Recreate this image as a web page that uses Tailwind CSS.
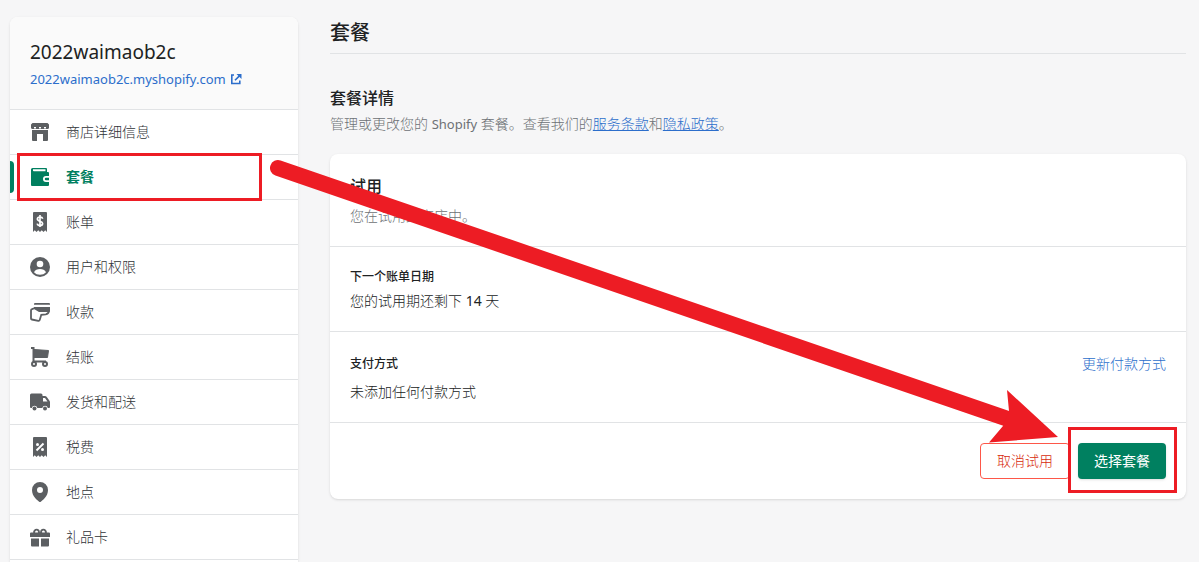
<!doctype html>
<html lang="zh-CN">
  <head>
    <meta charset="UTF-8" />
    <meta name="viewport" content="width=device-width, initial-scale=1.0" />
    <title>套餐</title>
    <script src="https://cdn.jsdelivr.net/npm/@tailwindcss/browser@4"></script>
  </head>

  <body
    class="relative bg-[#f6f6f7] font-['Noto_Sans','Noto_Sans_CJK_SC',sans-serif] text-sm leading-5 text-[#202223]"
  >
    <div class="flex h-screen gap-8 overflow-hidden pl-[10px] pr-[13px]">
      <!-- Settings navigation -->
      <aside
        class="mt-[17px] w-72 shrink-0 overflow-hidden rounded-t-lg bg-white shadow"
      >
        <div class="h-[92px] bg-[#fafafa] px-5 pt-[21px]">
          <p class="text-[19px] leading-7">2022waimaob2c</p>
          <a
            href="#"
            class="flex items-center gap-1 text-[13px] leading-[26px] text-[#2c6ecb]"
          >
            2022waimaob2c.myshopify.com
            <svg class="size-3" viewBox="0 0 12 12" fill="none" stroke="currentColor" stroke-width="1.6">
              <path d="M4 2H1.800v8.500h8V7.500M5 7.300l5.200-5.200" />
              <path d="M6.500 1h5v5z" fill="currentColor" stroke="none" />
            </svg>
          </a>
        </div>

        <nav class="font-light text-[#303337]">
          <a href="#" class="flex h-[45px] items-center gap-4 border-t border-[#e1e3e5] px-5">
            <svg class="size-5 text-[#5c5f62]" viewBox="0 0 20 20" fill="currentColor">
              <path d="M2.500 1h15L19 2.500V6a1.500 1.500 0 0 1-1.500 1h-15A1.500 1.500 0 0 1 1 6V2.500z" />
              <path d="M4 5h2v1.500H4zM9 5h2v1.500H9zM14 5h2v1.500h-2z" fill="#fff" />
              <path d="M2 8h16v10a1 1 0 0 1-1 1h-4v-7H7v7H3a1 1 0 0 1-1-1z" />
            </svg>
            商店详细信息
          </a>
          <a
            href="#"
            aria-current="page"
            class="relative flex h-[45px] items-center gap-4 border-t border-[#e1e3e5] px-5 font-bold text-[#007f5f]"
          >
            <span class="absolute inset-y-[6px] left-0 w-1 rounded-r bg-[#008060]"></span>
            <span class="absolute -top-[2px] -bottom-[2px] left-[7px] right-9 border-3 border-[#ed1c24]"></span>
            <svg class="size-5" viewBox="0 0 20 20" fill="currentColor">
              <path
                fill-rule="evenodd"
                d="M2.500 1H16a1 1 0 0 1 1 1v3h1a1 1 0 0 1 1 1v3h-3a3 3 0 0 0 0 6h3v3a1 1 0 0 1-1 1H2a1 1 0 0 1-1-1V2.500A1.500 1.500 0 0 1 2.500 1zM3 2.200v1.300q0 .8.800.8H15.500V2.200z"
              />
              <path d="M16 10.800h3v2.400h-3a1.200 1.200 0 0 1 0-2.400z" />
            </svg>
            套餐
          </a>
          <a href="#" class="flex h-[45px] items-center gap-4 border-t border-[#e1e3e5] px-5">
            <svg class="size-5 text-[#5c5f62]" viewBox="0 0 20 20" fill="currentColor">
              <path d="M4 0h12a1 1 0 0 1 1 1v19l-1.750-1.800L13.500 20l-1.750-1.800L10 20l-1.750-1.800L6.500 20l-1.750-1.800L3 20V1a1 1 0 0 1 1-1z" />
              <path d="M12.700 6.800C12.400 5.500 11.300 5 10 5c-1.500 0-2.600.8-2.600 2.100 0 3 5.200 1.600 5.200 4.400 0 1.300-1.100 2-2.600 2s-2.500-.6-2.800-1.900M10 3v12" fill="none" stroke="#fff" stroke-width="1.700" />
            </svg>
            账单
          </a>
          <a href="#" class="flex h-[45px] items-center gap-4 border-t border-[#e1e3e5] px-5">
            <svg class="size-5 text-[#5c5f62]" viewBox="0 0 20 20">
              <circle cx="10" cy="10" r="10" fill="currentColor" />
              <circle cx="10" cy="7" r="3.300" fill="#fff" />
              <path d="M4 15.300C5 13 7.300 12 10 12s5 1 6 3.300c-1.500 1.700-3.600 2.500-6 2.500s-4.500-.8-6-2.500z" fill="#fff" />
            </svg>
            用户和权限
          </a>
          <a href="#" class="flex h-[45px] items-center gap-4 border-t border-[#e1e3e5] px-5">
            <svg class="size-5 text-[#5c5f62]" viewBox="0 0 20 20" fill="currentColor">
              <path d="M5 1h14a1 1 0 0 1 1 1v.700H4V2a1 1 0 0 1 1-1zM4 5h16v4a1 1 0 0 1-1 1H9L4 7z" />
              <path d="M5 6 2 7.200A1.500 1.500 0 0 0 1 8.600V16.500a1 1 0 0 0 .8 1l6.500 1.300a1.200 1.200 0 0 0 1.400-.8l1.600-5.200 4.500-.5q2.700-.5 3.200-3.300" fill="none" stroke="currentColor" stroke-width="1.800" />
            </svg>
            收款
          </a>
          <a href="#" class="flex h-[45px] items-center gap-4 border-t border-[#e1e3e5] px-5">
            <svg class="size-5 text-[#5c5f62]" viewBox="0 0 20 20" fill="none" stroke="currentColor" stroke-width="2">
              <path d="M1 1h2.500v13.500h12.500" />
              <path d="M4 2.500 18.500 3.500l-1 7H4z" fill="currentColor" stroke-width="1" stroke-linejoin="round" />
              <circle cx="4" cy="17" r="2" fill="#fff" />
              <circle cx="15" cy="17" r="2" fill="#fff" />
            </svg>
            结账
          </a>
          <a href="#" class="flex h-[45px] items-center gap-4 border-t border-[#e1e3e5] px-5">
            <svg class="size-5 text-[#5c5f62]" viewBox="0 0 20 20" fill="currentColor">
              <path
                fill-rule="evenodd"
                d="M1.500 1.500h9.500A1.500 1.500 0 0 1 12.500 3v1H15a2 2 0 0 1 1.600.8l2.900 4q.5.700.5 1.500V15a1 1 0 0 1-1 1h-1.200a2.800 2.800 0 0 0-5.500 0H7.300a2.800 2.800 0 0 0-5.500 0H1a1 1 0 0 1-1-1V3a1.500 1.500 0 0 1 1.500-1.500zM13 6v3.500h4.500L15 6z"
              />
              <circle cx="4.500" cy="16.500" r="2" />
              <circle cx="15" cy="16.500" r="2" />
            </svg>
            发货和配送
          </a>
          <a href="#" class="flex h-[45px] items-center gap-4 border-t border-[#e1e3e5] px-5">
            <svg class="size-5 text-[#5c5f62]" viewBox="0 0 20 20" fill="currentColor">
              <path d="M4 0h12a1 1 0 0 1 1 1v19l-1.750-1.800L13.500 20l-1.750-1.800L10 20l-1.750-1.800L6.500 20l-1.750-1.800L3 20V1a1 1 0 0 1 1-1z" />
              <path d="m6.500 13.500 7-7" stroke="#fff" stroke-width="1.900" />
              <circle cx="7.500" cy="7.500" r="1.500" fill="#fff" />
              <circle cx="12.500" cy="12.500" r="1.500" fill="#fff" />
            </svg>
            税费
          </a>
          <a href="#" class="flex h-[45px] items-center gap-4 border-t border-[#e1e3e5] px-5">
            <svg class="size-5 text-[#5c5f62]" viewBox="0 0 20 20" fill="currentColor">
              <path
                fill-rule="evenodd"
                d="M10 0a8 8 0 0 0-8 8c0 6.500 5.500 10.500 7.500 11.900a1 1 0 0 0 1 0C12.500 18.500 18 14.500 18 8a8 8 0 0 0-8-8zm0 5a3 3 0 1 1 0 6 3 3 0 0 1 0-6z"
              />
            </svg>
            地点
          </a>
          <a href="#" class="flex h-[46px] items-center gap-4 border-y border-[#e1e3e5] px-5">
            <svg class="size-5 text-[#5c5f62]" viewBox="0 0 20 20" fill="currentColor">
              <path d="M1 5.500h18a1 1 0 0 1 1 1V10H0V6.500a1 1 0 0 1 1-1zM1 11.500h8v8H2a1 1 0 0 1-1-1zM11 11.500h8v7a1 1 0 0 1-1 1h-7z" />
              <path d="M4.500 6.500a2.500 2.500 0 1 1 4.500-2q.3 1-.500 2M15.500 6.500a2.500 2.500 0 1 0-4.500-2q-.3 1 .500 2" fill="none" stroke="currentColor" stroke-width="1.900" />
            </svg>
            礼品卡
          </a>
        </nav>
      </aside>

      <!-- Plan page -->
      <main class="min-w-0 grow">
        <h1 class="border-b border-[#e1e3e5] pt-[19px] pb-[6px] text-xl font-medium leading-7">
          套餐
        </h1>

        <h2 class="mt-8 text-base font-medium leading-6">套餐详情</h2>
        <p class="mt-1 font-light text-[#6d7175]">
          管理或更改您的 <span class="text-[13px] font-normal">Shopify</span> 套餐。查看我们的<a
            href="#"
            class="text-[#2c6ecb] underline"
            >服务条款</a
          >和<a href="#" class="text-[#2c6ecb] underline">隐私政策</a>。
        </p>

        <div class="mt-5 divide-y divide-[#e1e3e5] rounded-lg bg-white shadow">
          <section class="p-5">
            <h2 class="text-base font-medium leading-6">试用</h2>
            <p class="mt-2 font-light text-[#6d7175]">您在试用此商店中。</p>
          </section>
          <section class="p-5">
            <h3 class="text-xs font-medium leading-5">下一个账单日期</h3>
            <p class="mt-1 font-light">您的试用期还剩下 <span class="font-normal">14</span> 天</p>
          </section>
          <section class="flex items-start justify-between px-5 pt-[22px] pb-5">
            <div>
              <h3 class="text-xs font-medium leading-5">支付方式</h3>
              <p class="mt-2 font-light">未添加任何付款方式</p>
            </div>
            <a href="#" class="font-light text-[#2c6ecb]">更新付款方式</a>
          </section>
          <div class="flex justify-end gap-2 p-5">
            <button
              class="h-9 rounded border border-[#fd5749] px-4 font-light text-[#d72c0d]"
            >
              取消试用
            </button>
            <div class="relative">
              <button class="h-9 rounded bg-[#008060] px-4 text-white shadow-sm">
                选择套餐
              </button>
              <span class="pointer-events-none absolute -top-4 -right-[11px] -bottom-[14px] -left-[10px] border-3 border-[#ed1c24]"></span>
            </div>
          </div>
        </div>
      </main>
    </div>

    <!-- Arrow from the menu item to the button -->
    <svg
      class="pointer-events-none absolute top-0 left-0"
      width="1199"
      height="562"
      viewBox="0 0 1199 562"
      fill="#ed1c24"
    >
      <path d="M278 168 1008 419" stroke="#ed1c24" stroke-width="16" stroke-linecap="round" />
      <path d="m1007 390 51 47-69 5.500 14-16.500 6-15z" />
    </svg>
  </body>
</html>
